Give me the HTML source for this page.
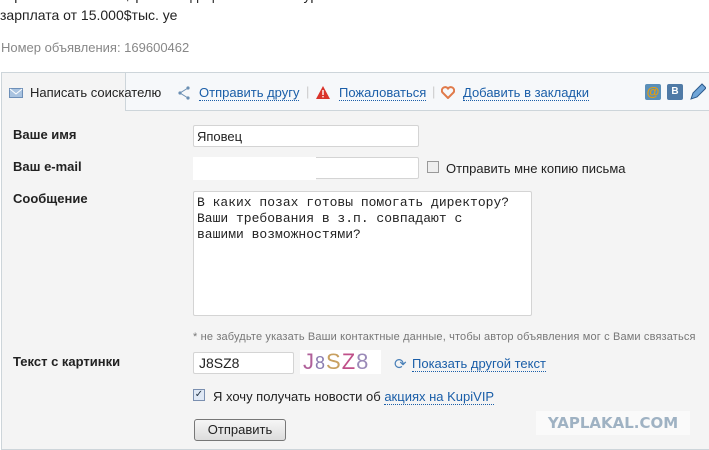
<!DOCTYPE html>
<html><head><meta charset="utf-8"><style>
*{margin:0;padding:0;box-sizing:border-box}
body{width:709px;height:450px;overflow:hidden;background:#fff;font-family:"Liberation Sans",Arial,sans-serif;font-size:13px;color:#222;position:relative}
.a{position:absolute;white-space:nowrap}
.lnk{color:#1a5ea8;border-bottom:1px dotted #1a5ea8}
.lbl{font-weight:bold;font-size:13px;left:13px}
.inp{position:absolute;background:#fff;border:1px solid #d4d4d4;border-radius:2px}
</style></head><body>
<div class="a" style="top:-13px;left:0;font-size:14px;color:#222">зарплата от 15.000$ рекомендации и высокий уровень ...</div>
<div class="a" style="top:6px;left:0;font-size:14px;color:#222;background:#fff;width:709px;height:22px;padding-top:1px">зарплата от 15.000$тыс. уе</div>
<div class="a" style="top:40px;left:1px;font-size:13px;color:#888">Номер объявления: 169600462</div>

<div class="a" style="top:72px;left:1px;width:709px;height:378px;background:#f4f4f4;border:1px solid #cdd5da;border-right:none"></div>
<div class="a" style="top:72px;left:125px;width:584px;height:39px;background:#f6f8fa;border:1px solid #cdd5da;border-right:none;border-top:1px solid #cdd5da"></div>

<svg class="a" style="top:88px;left:9px" width="14" height="10"><rect x=".5" y=".5" width="13" height="9" fill="#a9c3e0" stroke="#6d8fb8"/><path d="M1 1l6 5 6-5" fill="none" stroke="#fff"/></svg>
<div class="a" style="top:85px;left:30px;font-size:13px">Написать соискателю</div>

<svg class="a" style="top:86px;left:178px" width="12" height="14"><circle cx="10" cy="2" r="1.6" fill="#6b8fb3"/><circle cx="2" cy="7" r="1.6" fill="#6b8fb3"/><circle cx="10" cy="12" r="1.6" fill="#6b8fb3"/><path d="M10 2L2 7l8 5" fill="none" stroke="#6b8fb3"/></svg>
<div class="a lnk" style="top:85px;left:199px">Отправить другу</div>
<div class="a" style="top:84px;left:306px;color:#ccc">|</div>
<svg class="a" style="top:86px;left:316px" width="14" height="13"><path d="M7 0L14 13H0z" fill="#d9342b"/><rect x="6.3" y="4" width="1.4" height="5" fill="#fff"/><rect x="6.3" y="10" width="1.4" height="1.4" fill="#fff"/></svg>
<div class="a lnk" style="top:85px;left:339px">Пожаловаться</div>
<div class="a" style="top:84px;left:432px;color:#ccc">|</div>
<svg class="a" style="top:86px;left:441px" width="14" height="13"><path d="M7 12L1.5 6.5A3 3 0 0 1 7 2.5 3 3 0 0 1 12.5 6.5z" fill="none" stroke="#e07a4a" stroke-width="2"/></svg>
<div class="a lnk" style="top:85px;left:463px">Добавить в закладки</div>

<div class="a" style="top:84px;left:645px;width:16px;height:16px;background:#5a8fb8;border-radius:2px;color:#f0a000;font-size:13px;font-weight:bold;text-align:center;line-height:16px">@</div>
<div class="a" style="top:84px;left:667px;width:16px;height:16px;background:#4f7aa6;border-radius:2px;color:#fff;font-size:10px;font-weight:bold;text-align:center;line-height:16px">B</div>
<svg class="a" style="top:82px;left:688px" width="18" height="20"><path d="M3 17l2-6 9-9 4 4-9 9z" fill="#6fa5d8" stroke="#2c5a8c"/></svg>

<div class="a lbl" style="top:127px">Ваше имя</div>
<div class="inp" style="top:125px;left:193px;width:226px;height:22px"></div>
<div class="a" style="top:129px;left:197px">Яповец</div>

<div class="a lbl" style="top:159px">Ваш e-mail</div>
<div class="inp" style="top:157px;left:193px;width:226px;height:22px"></div>
<div class="a" style="top:157px;left:193px;width:123px;height:23px;background:#fff"></div>
<div class="a" style="top:161px;left:427px;width:12px;height:12px;border:1px solid #999;background:#eee"></div>
<div class="a" style="top:161px;left:446px">Отправить мне копию письма</div>

<div class="a lbl" style="top:191px">Сообщение</div>
<div class="inp" style="top:191px;left:193px;width:339px;height:125px"></div>
<div class="a" style="top:195px;left:197px;font-family:'Liberation Mono',monospace;font-size:13px;line-height:16px;white-space:pre">В каких позах готовы помогать директору?
Ваши требования в з.п. совпадают с
вашими возможностями?</div>

<div class="a" style="top:331px;left:193px;font-size:11px;color:#777;letter-spacing:0.15px">* не забудьте указать Ваши контактные данные, чтобы автор объявления мог с Вами связаться</div>

<div class="a lbl" style="top:354px">Текст с картинки</div>
<div class="inp" style="top:352px;left:193px;width:101px;height:22px"></div>
<div class="a" style="top:355px;left:199px;font-size:14px">J8SZ8</div>
<div class="a" style="top:350px;left:300px;width:81px;height:24px;background:#fff"></div>
<div class="a" style="top:349px;left:303px;font-size:22px;color:#b0609a;letter-spacing:1px">J<span style="color:#8a7cb0;font-size:18px">8</span><span style="color:#c8a060">S</span><span style="color:#c0508a">Z</span><span style="color:#9a8ab8">8</span></div>
<div class="a" style="top:355px;left:394px;color:#4a80b8;font-size:15px">⟳</div>
<div class="a lnk" style="top:356px;left:412px">Показать другой текст</div>

<div class="a" style="top:389px;left:193px;width:12px;height:12px;border:1px solid #7a8fb0;background:#dfe8f5;font-size:10px;line-height:10px;text-align:center;color:#234">✓</div>
<div class="a" style="top:389px;left:213px">Я хочу получать новости об <span class="lnk">акциях на KupiVIP</span></div>

<div class="a" style="top:419px;left:194px;width:92px;height:22px;border:1px solid #777;border-radius:3px;background:linear-gradient(#f6f6f6,#dcdcdc);text-align:center;line-height:20px;font-size:13px">Отправить</div>

<div class="a" style="top:411px;left:536px;width:154px;height:24px;background:#fafafa;color:#9fb2c3;font-weight:bold;font-size:15px;text-align:center;line-height:24px;font-family:'DejaVu Sans',sans-serif">YAPLAKAL.COM</div>
</body></html>
